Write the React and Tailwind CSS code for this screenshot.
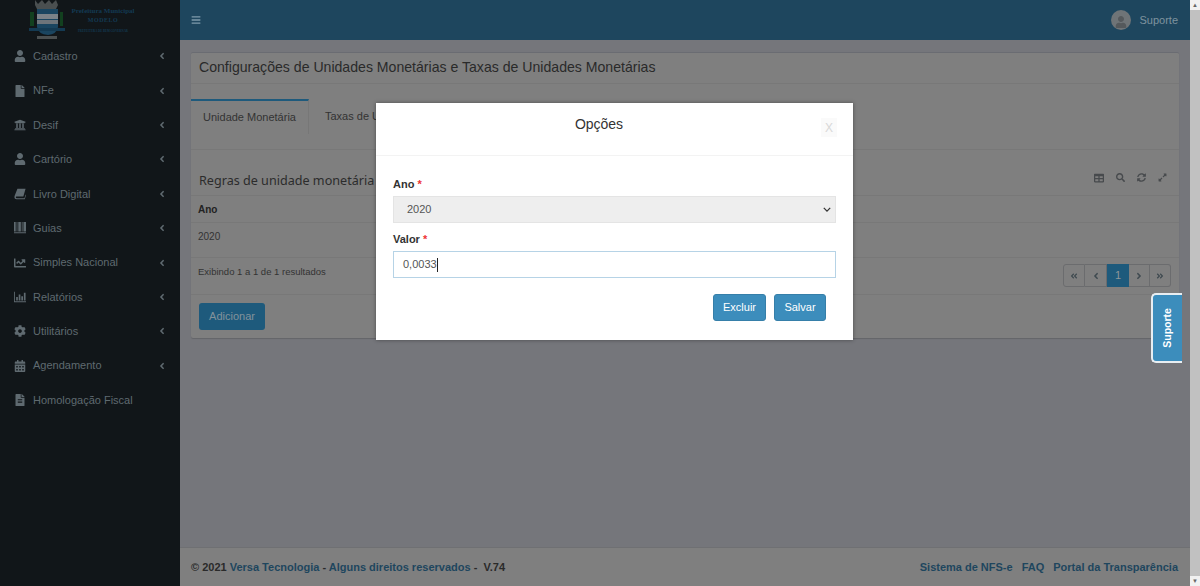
import React from 'react';
import {
  FaUser, FaFile, FaUniversity, FaChartLine, FaCog, FaCalendarAlt, FaFileAlt,
  FaBars, FaTable, FaSearch, FaSyncAlt, FaExpandAlt, FaAngleLeft, FaAngleRight,
  FaAngleDoubleLeft, FaAngleDoubleRight,
} from 'react-icons/fa';

const GuiasIcon = ({ className }) => (
  <svg viewBox="0 0 14 14" className={className} fill="currentColor">
    <path d="M0 0h2v11H0zM3 0h1v11H3zM5 0h3v11H5zM9 0h1v11H9zM11 0h3v11h-3zM0 12h14v1H0z" />
  </svg>
);

const BarsIcon = ({ className }) => (
  <svg viewBox="0 0 14 14" className={className} fill="currentColor">
    <path d="M0 1h1v11h13v1H0zM2.5 7h2v4h-2zM5.5 4h2v7h-2zM8.5 6h2v5h-2zM11.5 2h2v9h-2z" />
  </svg>
);

const BookIcon = ({ className }) => (
  <svg viewBox="0 0 14 14" className={className} fill="currentColor">
    <path d="M4 1h9.5l-2.6 9H3.2c-.9 0-1.2.6-1 1.2.1.4.5.8 1 .8h9l1.3-4.4.5.6L12.6 13H3C1.6 13 .4 12 .5 10.4.6 9.8.7 9.3 1 8.6z" />
  </svg>
);

const menu = [
  { label: 'Cadastro', icon: FaUser, arrow: true },
  { label: 'NFe', icon: FaFile, arrow: true },
  { label: 'Desif', icon: FaUniversity, arrow: true },
  { label: 'Cartório', icon: FaUser, arrow: true },
  { label: 'Livro Digital', icon: BookIcon, arrow: true },
  { label: 'Guias', icon: GuiasIcon, arrow: true },
  { label: 'Simples Nacional', icon: FaChartLine, arrow: true },
  { label: 'Relatórios', icon: BarsIcon, arrow: true },
  { label: 'Utilitários', icon: FaCog, arrow: true },
  { label: 'Agendamento', icon: FaCalendarAlt, arrow: true },
  { label: 'Homologação Fiscal', icon: FaFileAlt, arrow: false },
];

function Logo() {
  return (
    <div className="h-[39px] flex items-start pl-[29px] overflow-hidden">
      <svg width="36" height="40" viewBox="0 0 36 40" className="shrink-0">
        <path d="M6 0l3 4 4-4 3 4 4-4 3 4 4-4 2 5-2 4H8L6 5z" fill="#4a4f50" />
        <path d="M8 9h21v18q-1 7-10 8-10-1-11-8z" fill="#1a4560" />
        <rect x="8" y="14" width="21" height="5" fill="#7b8288" />
        <rect x="8" y="20" width="21" height="4" fill="#6d747a" />
        <path d="M1 12h4v14H1zM31 12h3v14h-3z" fill="#12401f" />
        <rect x="0" y="28" width="36" height="3" fill="#143a52" />
        <rect x="8" y="36" width="20" height="3" fill="#4a4f50" />
      </svg>
      <div className="ml-[5px] w-[66px] text-center text-[#133a53] font-['Liberation_Serif',serif] font-bold">
        <div className="text-[7px] leading-[8px] mt-[7px] whitespace-nowrap">Prefeitura Municipal</div>
        <div className="text-[6px] leading-[7px] mt-[2px] tracking-[0.5px]">MODELO</div>
        <div className="text-[3px] leading-[4px] mt-[5px] whitespace-nowrap">PREFEITURA DE BEM GOVERNAR</div>
      </div>
    </div>
  );
}

function Sidebar() {
  return (
    <aside className="w-[180px] shrink-0 bg-[#111619]">
      <Logo />
      <ul className="text-[11px] text-[#5f6a70]">
        {menu.map((item) => (
          <li key={item.label} className="h-[34.4px] flex items-center pl-[14px] pr-[13px]">
            <span className="w-[19px] flex justify-start">
              <item.icon className="w-[12px] h-[12px]" />
            </span>
            <span className="flex-1 whitespace-nowrap">{item.label}</span>
            {item.arrow && <FaAngleLeft className="w-[10px] h-[10px]" />}
          </li>
        ))}
      </ul>
    </aside>
  );
}

function Pager() {
  const cell = 'h-[23px] flex items-center justify-center border border-[#6b6c6e] text-[#3f4a50]';
  return (
    <div className="flex text-[11px]">
      <span className={`${cell} w-[22px] rounded-l-[3px]`}><FaAngleDoubleLeft className="w-[8px] h-[8px]" /></span>
      <span className={`${cell} w-[22px] border-l-0`}><FaAngleLeft className="w-[10px] h-[10px]" /></span>
      <span className="h-[23px] w-[22px] flex items-center justify-center bg-[#1e5a7c] text-[#8f9599]">1</span>
      <span className={`${cell} w-[21px] border-l-0`}><FaAngleRight className="w-[10px] h-[10px]" /></span>
      <span className={`${cell} w-[21px] border-l-0 rounded-r-[3px]`}><FaAngleDoubleRight className="w-[8px] h-[8px]" /></span>
    </div>
  );
}

function Content() {
  return (
    <div className="flex-1 min-w-0 flex flex-col">
      <header className="h-[39.5px] shrink-0 bg-[#1e465e] flex items-center justify-between pl-[11px] pr-[12px]">
        <FaBars className="w-[10px] h-[10px] text-[#7f9aab]" />
        <div className="flex items-center gap-[8px]">
          <span className="w-[20px] h-[20px] rounded-full bg-[#6f7477] flex items-end justify-center overflow-hidden">
            <FaUser className="w-[12px] h-[12px] text-[#55595c] mb-[2px]" />
          </span>
          <span className="text-[11px] text-[#7f939f]">Suporte</span>
        </div>
      </header>
      <main className="flex-1 bg-[#75767b] pt-[12px] px-[11px]">
        <section className="bg-[#7f7f7f] border-t border-[#6a6c72] rounded-[2px] shadow-[0_1px_1px_rgba(0,0,0,0.15)]">
          <h1 className="h-[30px] pl-[8px] pt-[4px] text-[14.1px] leading-[20px] text-[#2a2a2a] font-normal whitespace-nowrap">
            Configurações de Unidades Monetárias e Taxas de Unidades Monetárias
          </h1>
          <div className="h-[17px] border-t border-[#787878]" />
          <nav className="flex h-[34px] text-[11px] text-[#333]">
            <span className="w-[118px] -mt-[1px] border-t-2 border-r border-t-[#1e5a7c] border-r-[#777] flex items-center justify-center">
              Unidade Monetária
            </span>
            <span className="w-[60px] pl-[16px] flex items-center whitespace-nowrap">Taxas de U</span>
          </nav>
          <div className="h-[16px] border-b border-[#787878]" />
          <div className="h-[46px] flex items-end justify-between pl-[8px] pr-[12px] pb-[4px] border-b border-[#787878]">
            <span className="font-['Noto_Sans',sans-serif] text-[12.6px] leading-[20px] text-[#2c2c2c]">
              Regras de unidade monetária p
            </span>
            <span className="flex items-center gap-[12px] text-[#474a4d] mb-[8px]">
              <FaTable className="w-[10px] h-[10px]" />
              <FaSearch className="w-[9px] h-[9px]" />
              <FaSyncAlt className="w-[9px] h-[9px]" />
              <FaExpandAlt className="w-[9px] h-[9px]" />
            </span>
          </div>
          <div className="h-[27px] pl-[7px] pt-[2px] flex items-center text-[10px] font-bold text-[#222] border-b border-[#787878]">Ano</div>
          <div className="h-[35px] pl-[7px] pb-[7px] flex items-center text-[10px] text-[#333] border-b border-[#787878]">2020</div>
          <div className="h-[37px] pl-[7px] pr-[8px] flex items-center justify-between text-[9.5px] text-[#333] border-b border-[#787878]">
            <span className="mb-[7px]">Exibindo 1 a 1 de 1 resultados</span>
            <Pager />
          </div>
          <div className="h-[43px] pl-[8px] pt-[8px]">
            <button className="h-[27px] w-[66px] rounded-[3px] bg-[#1e5a7c] text-[#83929b] text-[11px]">Adicionar</button>
          </div>
        </section>
      </main>
      <footer className="h-[39px] shrink-0 bg-[#7f7f7f] border-t border-[#6f7073] flex items-center justify-between pl-[11px] pr-[12px] text-[11px] font-bold text-[#2a2a2a]">
        <span>
          © 2021 <span className="text-[#1e465e]">Versa Tecnologia</span> - <span className="text-[#1e465e]">Alguns direitos reservados</span> -&nbsp; V.74
        </span>
        <span className="flex gap-[9px] text-[#1e465e]">
          <span>Sistema de NFS-e</span>
          <span>FAQ</span>
          <span>Portal da Transparência</span>
        </span>
      </footer>
    </div>
  );
}

function Modal() {
  return (
    <div className="absolute left-[376px] top-[103px] w-[477px] h-[237px] bg-white shadow-[0_0_4px_rgba(0,0,0,0.4)] text-[#333]">
      <div className="relative h-[53px] border-b border-[#f3f3f3] flex justify-center pt-[11px] pr-[31px]">
        <span className="text-[14px] leading-[20px]">Opções</span>
        <span className="absolute left-[445px] top-[15px] w-[16px] h-[19px] bg-[#fafafa] flex items-center justify-center text-[12px] text-[#d8d8d8]">X</span>
      </div>
      <div className="px-[17px] pt-[21px]">
        <label className="block text-[11px] leading-[15px] font-bold text-[#333]">
          Ano <span className="text-[#e33]">*</span>
        </label>
        <div className="relative mt-[4px]">
          <div className="h-[27px] bg-[#eeeeee] border border-[#e4e4e4] pl-[13px] flex items-center text-[11px] text-[#555]">2020</div>
          <svg viewBox="0 0 10 6" className="absolute right-[5px] top-[11px] w-[8px] h-[5px] text-[#333]" fill="none" stroke="currentColor" strokeWidth="1.6">
            <path d="M1 1l4 4 4-4" />
          </svg>
        </div>
        <label className="block mt-[9px] text-[11px] leading-[15px] font-bold text-[#333]">
          Valor <span className="text-[#e33]">*</span>
        </label>
        <div className="mt-[4px] h-[27px] bg-white border border-[#b6d3e6] pl-[9px] flex items-center text-[11px] text-[#555]">
          0,0033<span className="inline-block w-[1px] h-[14px] bg-[#222]" />
        </div>
        <div className="flex justify-end gap-[8px] mt-[16px] pr-[10px]">
          <button className="h-[27px] w-[53px] rounded-[3px] bg-[#3c8dbc] border border-[#367fa9] text-white text-[11px]">Excluir</button>
          <button className="h-[27px] w-[52px] rounded-[3px] bg-[#3c8dbc] border border-[#367fa9] text-white text-[11px]">Salvar</button>
        </div>
      </div>
    </div>
  );
}

export default function App() {
  return (
    <div className="relative h-[586px] w-[1200px] overflow-hidden flex font-['Liberation_Sans',Arial,sans-serif]">
      <div className="flex-1 min-w-0 flex">
        <Sidebar />
        <Content />
      </div>
      {/* scrollbar */}
      <div className="w-[10px] shrink-0 bg-[#f1f1f1] flex flex-col items-center">
        <span className="h-[10px] text-[6px] leading-[10px] text-[#666]">▲</span>
        <div className="flex-1 w-full bg-[#c1c1c1]" />
        <span className="h-[10px] text-[6px] leading-[10px] text-[#666]">▼</span>
      </div>
      <Modal />
      <div className="absolute left-[1151px] top-[293px] w-[31px] h-[70px] bg-[#3c8dbc] border-2 border-r-0 border-[#e8eef2] rounded-l-[5px] flex items-center justify-center">
        <span className="-rotate-90 text-white text-[10.5px] font-bold whitespace-nowrap">Suporte</span>
      </div>
    </div>
  );
}
